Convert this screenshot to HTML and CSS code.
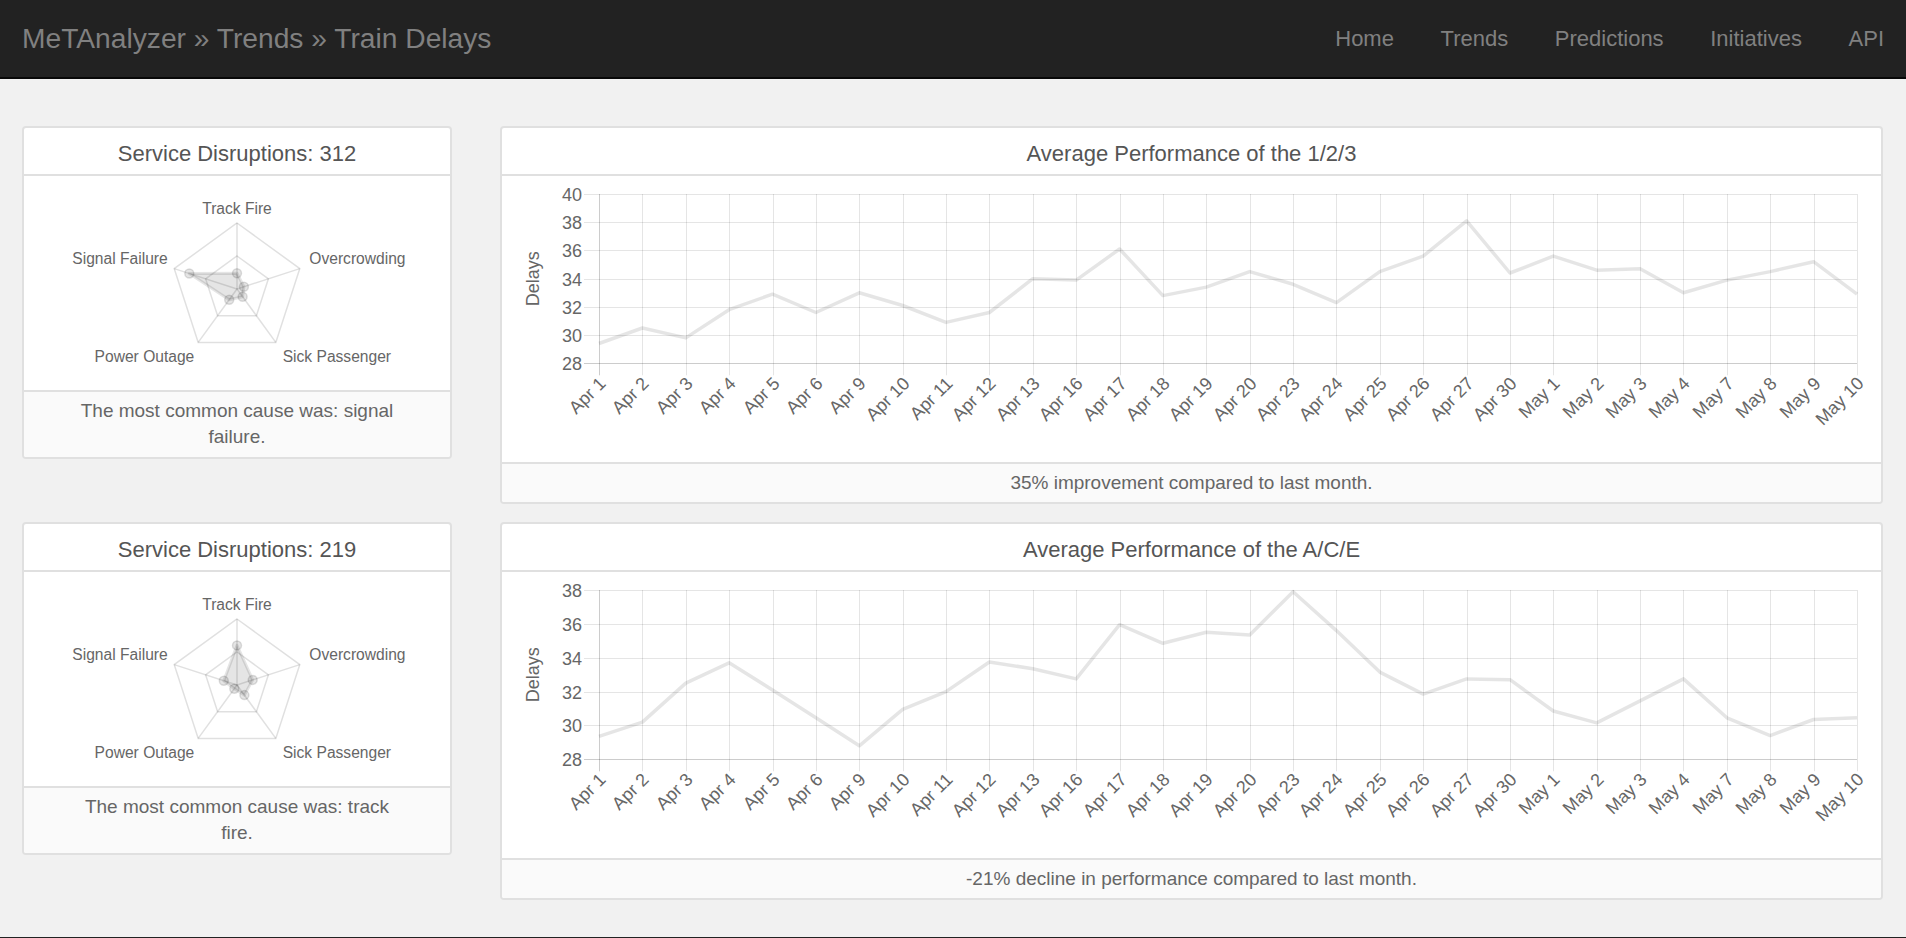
FILE: index.html
```html
<!DOCTYPE html>
<html lang="en">
<head>
<meta charset="utf-8">
<title>MeTAnalyzer » Trends » Train Delays</title>
<link rel="stylesheet" href="styles.css">
</head>
<body>
<nav class="topbar">
  <a class="brand" href="#">MeTAnalyzer » Trends » Train Delays</a>
  <ul class="nav-links">
    <li><a href="#">Home</a></li>
    <li><a href="#">Trends</a></li>
    <li><a href="#">Predictions</a></li>
    <li><a href="#">Initiatives</a></li>
    <li><a href="#">API</a></li>
  </ul>
</nav>

<main class="dashboard">
  <section class="panel">
    <div class="panel-heading"><h3 class="panel-title">Service Disruptions: 312</h3></div>
    <div class="panel-body">
      <svg class="radar" width="426" height="214" data-values="0.24,0.11,0.145,0.2,0.76"></svg>
    </div>
    <div class="panel-footer cause">The most common cause was: signal failure.</div>
  </section>

  <section class="panel">
    <div class="panel-heading"><h3 class="panel-title">Average Performance of the 1/2/3</h3></div>
    <div class="panel-body">
      <svg class="line-chart" width="1379" height="286" data-min="28" data-max="40" data-title="Delays"
        data-values="29.4,30.5,29.8,31.8,32.9,31.6,33.0,32.1,30.9,31.6,34.0,33.9,36.1,32.8,33.4,34.5,33.6,32.3,34.5,35.6,38.1,34.4,35.6,34.6,34.7,33.0,33.9,34.5,35.2,32.9"></svg>
    </div>
    <div class="panel-footer">35% improvement compared to last month.</div>
  </section>

  <section class="panel">
    <div class="panel-heading"><h3 class="panel-title">Service Disruptions: 219</h3></div>
    <div class="panel-body">
      <svg class="radar" width="426" height="214" data-values="0.6,0.25,0.19,0.07,0.21"></svg>
    </div>
    <div class="panel-footer cause">The most common cause was: track fire.</div>
  </section>

  <section class="panel">
    <div class="panel-heading"><h3 class="panel-title">Average Performance of the A/C/E</h3></div>
    <div class="panel-body">
      <svg class="line-chart" width="1379" height="286" data-min="28" data-max="38" data-title="Delays"
        data-values="29.35,30.2,32.5,33.7,32.1,30.45,28.8,30.95,32.0,33.75,33.35,32.75,35.95,34.85,35.5,35.35,37.9,35.6,33.15,31.85,32.75,32.7,30.85,30.15,31.45,32.75,30.45,29.4,30.35,30.45"></svg>
    </div>
    <div class="panel-footer">-21% decline in performance compared to last month.</div>
  </section>
</main>

<footer class="bottombar"></footer>
<script src="script.js"></script>
</body>
</html>
```

FILE: styles.css
```css
* { box-sizing: border-box; }

html, body {
  margin: 0;
  height: 100%;
}

body {
  background: #f1f1f1;
  font-family: "Liberation Sans", Arial, sans-serif;
  color: #555;
  overflow: hidden;
}

.topbar {
  display: flex;
  align-items: center;
  justify-content: space-between;
  height: 79px;
  padding-left: 22px;
  background: #222;
  border-bottom: 2px solid #080808;
}

.brand {
  font-size: 28.2px;
  line-height: 77px;
  color: #808080;
  text-decoration: none;
}

.nav-links {
  display: flex;
  list-style: none;
  margin: 0;
  padding: 0;
}

.nav-links a {
  display: block;
  padding: 0 23.3px;
  font-size: 22px;
  line-height: 77px;
  color: #808080;
  text-decoration: none;
}

.nav-links li:last-child a {
  padding-right: 22px;
}

.dashboard {
  display: grid;
  grid-template-columns: 430px 1fr;
  column-gap: 48px;
  row-gap: 18px;
  align-items: start;
  padding: 47px 23px 37px 22px;
}

.panel {
  background: #fff;
  border: 2px solid #e0e0e0;
  border-radius: 4px;
  overflow: hidden;
}

.panel-heading {
  padding: 13px 15px 7px;
  border-bottom: 2px solid #e0e0e0;
  text-align: center;
}

.panel-title {
  margin: 0;
  font-size: 22px;
  font-weight: normal;
  line-height: 26px;
  color: #555;
}

.panel-body svg {
  display: block;
}

.panel-footer {
  padding: 6px 15px;
  background: #fafafa;
  border-top: 2px solid #e0e0e0;
  text-align: center;
  font-size: 19px;
  line-height: 26px;
  color: #666;
}

.panel-footer.cause {
  padding: 6px 50px 7px;
}

.tick,
.axis-title {
  font-family: "Liberation Sans", Arial, sans-serif;
  font-size: 18px;
  fill: #666;
}

.point-label {
  font-family: "Liberation Sans", Arial, sans-serif;
  font-size: 15.6px;
  fill: #666;
}

.bottombar {
  height: 1px;
  background: #222;
}
```

FILE: script.js
```js
(function () {
  var NS = 'http://www.w3.org/2000/svg';

  function el(tag, attrs, text) {
    var e = document.createElementNS(NS, tag);
    for (var k in attrs) e.setAttribute(k, attrs[k]);
    if (text != null) e.textContent = text;
    return e;
  }

  var LABELS = ['Apr 1', 'Apr 2', 'Apr 3', 'Apr 4', 'Apr 5', 'Apr 6', 'Apr 9', 'Apr 10', 'Apr 11', 'Apr 12',
    'Apr 13', 'Apr 16', 'Apr 17', 'Apr 18', 'Apr 19', 'Apr 20', 'Apr 23', 'Apr 24', 'Apr 25', 'Apr 26',
    'Apr 27', 'Apr 30', 'May 1', 'May 2', 'May 3', 'May 4', 'May 7', 'May 8', 'May 9', 'May 10'];

  function lineChart(svg) {
    var data = svg.dataset.values.split(',').map(Number);
    var min = +svg.dataset.min, max = +svg.dataset.max;
    var x0 = 97, x1 = 1355, y0 = 18, y1 = 187.3;
    var steps = (max - min) / 2;
    var n = LABELS.length;
    var g = el('g', {});

    for (var i = 0; i <= steps; i++) {
      var y = Math.round(y0 + (y1 - y0) * i / steps) + 0.5;
      g.appendChild(el('line', {
        x1: x0 - 15, x2: x1, y1: y, y2: y,
        stroke: i === steps ? 'rgba(0,0,0,0.2)' : 'rgba(0,0,0,0.1)', 'stroke-width': 1
      }));
      g.appendChild(el('text', { x: 80, y: y, 'text-anchor': 'end', 'dominant-baseline': 'central', 'class': 'tick' }, String(max - 2 * i)));
    }

    for (var j = 0; j < n; j++) {
      var x = Math.round(x0 + (x1 - x0) * j / (n - 1)) + 0.5;
      g.appendChild(el('line', {
        x1: x, x2: x, y1: y0, y2: y1 + 12,
        stroke: j === 0 ? 'rgba(0,0,0,0.2)' : 'rgba(0,0,0,0.1)', 'stroke-width': 1
      }));
      g.appendChild(el('text', {
        transform: 'translate(' + (x + 3) + ',' + (y1 + 17) + ') rotate(-45)',
        'text-anchor': 'end', 'dominant-baseline': 'central', 'class': 'tick'
      }, LABELS[j]));
    }

    var pts = data.map(function (v, k) {
      return (x0 + (x1 - x0) * k / (n - 1)).toFixed(1) + ',' + (y0 + (y1 - y0) * (max - v) / (max - min)).toFixed(1);
    });
    g.appendChild(el('polyline', {
      points: pts.join(' '), fill: 'none', stroke: 'rgba(0,0,0,0.1)',
      'stroke-width': 3.5, 'stroke-linejoin': 'round'
    }));

    g.appendChild(el('text', {
      transform: 'translate(31,' + ((y0 + y1) / 2) + ') rotate(-90)',
      'text-anchor': 'middle', 'dominant-baseline': 'central', 'class': 'axis-title'
    }, svg.dataset.title));

    svg.appendChild(g);
  }

  function radar(svg) {
    var vals = svg.dataset.values.split(',').map(Number);
    var cx = 213, cy = 113, R = 66;
    function pt(r, k) {
      var a = -Math.PI / 2 + k * 2 * Math.PI / 5;
      return [cx + r * Math.cos(a), cy + r * Math.sin(a)];
    }
    function poly(r) {
      var s = [];
      for (var k = 0; k < 5; k++) s.push(pt(r, k).map(function (v) { return v.toFixed(1); }).join(','));
      return s.join(' ');
    }
    var grid = 'rgba(0,0,0,0.12)';
    svg.appendChild(el('polygon', { points: poly(R / 2), fill: 'none', stroke: grid, 'stroke-width': 1.5 }));
    svg.appendChild(el('polygon', { points: poly(R), fill: 'none', stroke: grid, 'stroke-width': 1.5 }));
    for (var k = 0; k < 5; k++) {
      var p = pt(R, k);
      svg.appendChild(el('line', { x1: cx, y1: cy, x2: p[0].toFixed(1), y2: p[1].toFixed(1), stroke: grid, 'stroke-width': 1.5 }));
    }
    var dp = vals.map(function (v, k) { return pt(v * R, k); });
    svg.appendChild(el('polygon', {
      points: dp.map(function (q) { return q[0].toFixed(1) + ',' + q[1].toFixed(1); }).join(' '),
      fill: 'rgba(0,0,0,0.1)', stroke: 'rgba(0,0,0,0.1)', 'stroke-width': 3, 'stroke-linejoin': 'round'
    }));
    dp.forEach(function (q) {
      svg.appendChild(el('circle', { cx: q[0].toFixed(1), cy: q[1].toFixed(1), r: 4.5, fill: 'rgba(0,0,0,0.1)', stroke: 'rgba(0,0,0,0.12)', 'stroke-width': 1.5 }));
    });
    var labels = [
      ['Track Fire', 213, 38, 'middle'],
      ['Overcrowding', 285.3, 88, 'start'],
      ['Sick Passenger', 258.7, 186, 'start'],
      ['Power Outage', 170.3, 186, 'end'],
      ['Signal Failure', 143.7, 88, 'end']
    ];
    labels.forEach(function (l) {
      svg.appendChild(el('text', { x: l[1], y: l[2], 'text-anchor': l[3], 'class': 'point-label' }, l[0]));
    });
  }

  document.querySelectorAll('svg.line-chart').forEach(lineChart);
  document.querySelectorAll('svg.radar').forEach(radar);
})();
```
